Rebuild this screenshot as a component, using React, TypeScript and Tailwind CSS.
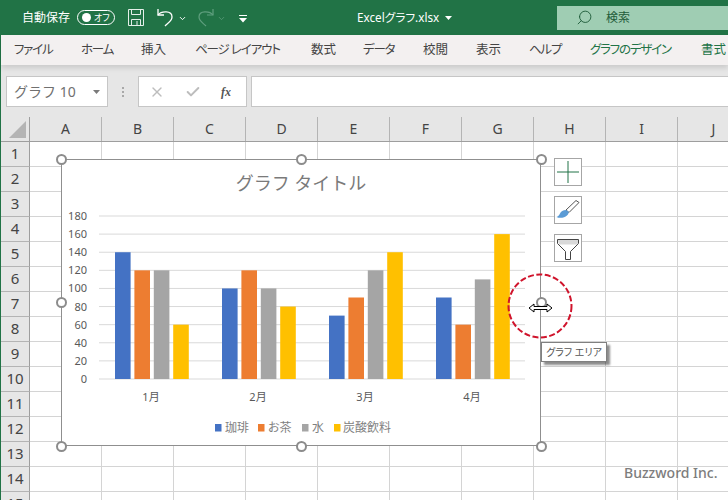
import React from 'react';
import { ChevronDown, Search, X, Check } from 'lucide-react';

const tabs = [
  { text: 'ファイル', className: 'w-[67px] tracking-[-1.2px]' },
  { text: 'ホーム', className: 'w-[60px] tracking-[-1.2px]' },
  { text: '挿入', className: 'w-[54px]' },
  { text: 'ページ レイアウト', className: 'w-[116px] tracking-[-1.1px]' },
  { text: '数式', className: 'w-[52px]' },
  { text: 'データ', className: 'w-[60px] tracking-[-1.2px]' },
  { text: '校閲', className: 'w-[53px]' },
  { text: '表示', className: 'w-[53px]' },
  { text: 'ヘルプ', className: 'w-[61px] tracking-[-1.2px]' },
  { text: 'グラフのデザイン', className: 'w-[111px] tracking-[-1.2px] text-[#217346]' },
  { text: '書式', className: 'w-[27px] text-[#217346]' },
];
const columns = ['A', 'B', 'C', 'D', 'E', 'F', 'G', 'H', 'I', 'J'];
const rows = Array.from({ length: 15 }, (_, i) => i + 1);

const colors = ['#4472c4', '#ed7d31', '#a5a5a5', '#ffc000'];
const data = [
  { label: '1月', values: [140, 120, 120, 60] },
  { label: '2月', values: [100, 120, 100, 80] },
  { label: '3月', values: [70, 90, 120, 140] },
  { label: '4月', values: [90, 60, 110, 160] },
];
const ticks = [180, 160, 140, 120, 100, 80, 60, 40, 20, 0];
const legend = [
  { x: 215, tx: 225, text: '珈琲' },
  { x: 258, tx: 268, text: 'お茶' },
  { x: 302, tx: 312, text: '水' },
  { x: 334, tx: 343, text: '炭酸飲料' },
];

const yOf = (v: number) => 379 - (v * 163) / 180;

function Chart() {
  return (
    <svg viewBox="61 159 480 287" className="absolute -left-[1.5px] -top-[1.5px] w-[480px] h-[287px]">
      <text x="301" y="190" textAnchor="middle" fontSize="18" fill="#7a7a7a" className="[font-feature-settings:normal]">グラフ タイトル</text>
      {ticks.map((t) => (
        <g key={t}>
          <line x1="99" x2="525" y1={yOf(t)} y2={yOf(t)} stroke="#d9d9d9" strokeWidth="1" />
          <text x="87" y={yOf(t) + 4} textAnchor="end" fontSize="11" fill="#595959">{t}</text>
        </g>
      ))}
      {data.map((g, i) => (
        <g key={g.label}>
          {g.values.map((v, j) => (
            <rect key={j} x={115 + i * 107 + j * 19.4} y={yOf(v)} width="15.6" height={379 - yOf(v)} fill={colors[j]} />
          ))}
          <text x={151 + i * 107} y="401" textAnchor="middle" fontSize="11" fill="#595959">{g.label}</text>
        </g>
      ))}
      {legend.map((l, i) => (
        <g key={l.text}>
          <rect x={l.x} y="424" width="6.5" height="7.5" fill={colors[i]} />
          <text x={l.tx} y="432" fontSize="12" fill="#7f7f7f">{l.text}</text>
        </g>
      ))}
    </svg>
  );
}

function Handle({ className }: { className: string }) {
  return <div className={`absolute w-[11px] h-[11px] rounded-full bg-white border-2 border-[#8c8c8c] ${className}`} />;
}

function TitleBar() {
  return (
    <div className="h-[35px] bg-[#217346] flex items-center text-white shrink-0">
      <span className="ml-[22px] text-[12px] w-[48px]">自動保存</span>
      <div className="ml-[7px] w-[38px] h-[15px] rounded-full border border-white flex items-center pl-[4px] gap-[3px]">
        <div className="w-[9px] h-[9px] rounded-full bg-white" />
        <span className="text-[9px] leading-none">オフ</span>
      </div>
      <svg width="16" height="17" viewBox="0 0 16 17" className="ml-[13px]" fill="none" stroke="#e4efe9" strokeWidth="1">
        <path d="M.5.5h15v16H.5z" />
        <path d="M3.5.5v5h9v-5M3.5 16.5v-6h9v6M9 12v4" />
      </svg>
      <svg width="17" height="19" viewBox="0 0 17 19" className="ml-[13px]" fill="none" stroke="#ffffff" strokeWidth="1.3">
        <path d="M1 1v6h6" />
        <path d="M1 7c3-4 14-5 14 2 0 4-4 6-7 9" />
      </svg>
      <ChevronDown size={9} strokeWidth={2.5} className="ml-[4px] mt-[2px]" />
      <svg width="17" height="19" viewBox="0 0 17 19" className="ml-[10px]" fill="none" stroke="#5f9f7e" strokeWidth="1.2">
        <path d="M16 1v6h-6" />
        <path d="M16 7C13 3 2 2 2 9c0 4 4 6 7 9" />
      </svg>
      <ChevronDown size={9} strokeWidth={2} color="#5f9f7e" className="ml-[3px] mt-[2px]" />
      <svg width="8" height="8" viewBox="0 0 8 8" className="ml-[13px] mt-[2px]" fill="#ffffff">
        <path d="M0 0h8v1H0zM0 3h8L4 7.5z" />
      </svg>
      <span className="ml-[110px] w-[82px] text-[11.7px] whitespace-nowrap">Excelグラフ.xlsx</span>
      <svg width="7" height="4" viewBox="0 0 7 4" className="ml-[6px] mt-[1px]" fill="#ffffff"><path d="M0 0h7L3.5 4z" /></svg>
      <div className="ml-[105px] flex-1 h-[24px] bg-[#9fcdb3] flex items-center pl-[19px] text-[#1f5c3a]">
        <Search size={17} strokeWidth={1.3} className="-scale-x-100" />
        <span className="ml-[13px] text-[12px]">検索</span>
      </div>
    </div>
  );
}

function TabBar() {
  return (
    <div className="relative z-10 h-[30px] bg-[#f3f0f0] flex items-center pl-[13px] text-[12.5px] text-[#444444] whitespace-nowrap shadow-[0_3px_5px_rgba(0,0,0,0.12)] shrink-0">
      {tabs.map((t) => (
        <span key={t.text} className={`shrink-0 ${t.className}`}>{t.text}</span>
      ))}
    </div>
  );
}

function FormulaBar() {
  return (
    <div className="h-[52px] bg-[#e6e6e6] flex pt-[11px] pl-[5px] shrink-0">
      <div className="w-[102px] h-[31px] bg-white border border-[#c6c6c6] flex items-center justify-between pl-[7px] pr-[7px] text-[14px] text-[#707070] [font-feature-settings:normal]">
        <span>グラフ 10</span>
        <svg width="7" height="4" viewBox="0 0 7 4" fill="#7a7a7a"><path d="M0 0h7L3.5 4z" /></svg>
      </div>
      <div className="w-[30px] h-[31px] flex flex-col items-center justify-center gap-[2px]">
        <div className="w-[2px] h-[2px] bg-[#a8a8a8]" />
        <div className="w-[2px] h-[2px] bg-[#a8a8a8]" />
        <div className="w-[2px] h-[2px] bg-[#a8a8a8]" />
      </div>
      <div className="w-[109px] h-[31px] bg-white border border-[#c6c6c6] flex items-center pl-[10px] text-[#bdbdbd]">
        <X size={16} strokeWidth={2} />
        <Check size={16} strokeWidth={3} className="ml-[20px]" />
        <span className="ml-[20px] font-['Liberation_Serif',serif] italic font-bold text-[12px] text-[#555555]">fx</span>
      </div>
      <div className="ml-[4px] flex-1 h-[31px] bg-white border border-[#c6c6c6] border-r-0" />
    </div>
  );
}

function Sheet() {
  return (
    <div className="flex-1 overflow-hidden bg-white">
      <div className="flex h-[25px] bg-[#e6e6e6] border-b border-[#9e9e9e]">
        <div className="w-[29px] border-r border-[#9e9e9e] shrink-0 relative">
          <div className="absolute left-[8px] top-[4px] w-0 h-0 border-l-[17px] border-l-transparent border-b-[17px] border-b-[#b4b4b4]" />
        </div>
        {columns.map((c) => (
          <div key={c} className="w-[72px] shrink-0 border-r border-[#b4b4b4] flex items-center justify-center text-[14px] text-[#444444] pb-[2px]">
            {c}
          </div>
        ))}
      </div>
      {rows.map((r) => (
        <div key={r} className="flex h-[25px]">
          <div className="w-[29px] shrink-0 bg-[#e6e6e6] border-r border-b border-r-[#9e9e9e] border-b-[#b4b4b4] flex items-center justify-center text-[15px] text-[#444444] pb-[1px]">
            {r}
          </div>
          {columns.map((c) => (
            <div key={c} className="w-[72px] shrink-0 border-r border-b border-[#d4d4d4]" />
          ))}
        </div>
      ))}
    </div>
  );
}

export default function App() {
  return (
    <div className="relative w-[728px] h-[500px] overflow-hidden flex flex-col bg-white font-['Noto_Sans','Noto_Sans_CJK_JP',sans-serif] [font-feature-settings:'palt']">
      <TitleBar />
      <div className="flex-1 flex flex-col min-h-0 border-l border-[#217346]">
        <TabBar />
        <FormulaBar />
        <Sheet />
      </div>

      {/* chart floats above the sheet */}
      <div className="absolute left-[61px] top-[159px] w-[480px] h-[287px] bg-white border-[1.5px] border-[#8f8f8f]">
        <Chart />
        <Handle className="-left-[6.5px] -top-[6.5px]" />
        <Handle className="left-[233.5px] -top-[6.5px]" />
        <Handle className="-right-[6.5px] -top-[6.5px]" />
        <Handle className="-left-[6.5px] top-[136.500px]" />
        <Handle className="-right-[6.5px] top-[136.500px]" />
        <Handle className="-left-[6.5px] -bottom-[6.5px]" />
        <Handle className="left-[233.5px] -bottom-[6.5px]" />
        <Handle className="-right-[6.5px] -bottom-[6.5px]" />
      </div>

      <div className="absolute left-[554px] top-[158px] flex flex-col gap-[10px]">
        <div className="w-[28px] h-[28px] bg-white border border-[#a6a6a6] flex items-center justify-center">
          <svg width="22" height="22" viewBox="0 0 22 22" stroke="#217346" strokeWidth="1"><path d="M11 0v22M0 11h22" /></svg>
        </div>
        <div className="w-[28px] h-[28px] bg-white border border-[#a6a6a6] flex items-center justify-center">
          <svg width="24" height="24" viewBox="0 0 24 24">
            <path d="M20 2.500l3 2-10 10-3-2.500z" fill="#ffffff" stroke="#555555" strokeWidth="1" />
            <path d="M10 12c-3 0-5 1.500-6 3.500-.8 2-2 3-3.500 3.500 3 1.500 8 1 10.500-1.500 1.500-1.500 2-3 1.500-4z" fill="#5b9bd5" />
          </svg>
        </div>
        <div className="w-[28px] h-[28px] bg-white border border-[#a6a6a6] flex items-center justify-center">
          <svg width="24" height="24" viewBox="0 0 24 24" fill="none" stroke="#444444" strokeWidth="1">
            <path d="M1.500 3.500h21v4l-8 8v8h-5v-8l-8-8z" fill="#ffffff" />
            <path d="M2 4h20v3.500l-1 1H3z" fill="#d9d9d9" stroke="none" />
          </svg>
        </div>
      </div>

      <svg width="70" height="70" viewBox="0 0 70 70" className="absolute left-[505px] top-[271px]" fill="none">
        <circle cx="35" cy="35" r="31.500" stroke="#d0142c" strokeWidth="2" strokeDasharray="6 2.500" />
        <path d="M24 37l5-4v2.500h13V33l5 4-5 4v-2.500H29V41z" fill="#ffffff" stroke="#000000" strokeWidth="1" />
      </svg>

      <div className="absolute left-[541px] top-[342px] w-[66px] h-[20px] bg-white border border-[#808080] shadow-[3px_3px_2px_rgba(0,0,0,0.45)] flex items-center justify-center text-[10px] text-[#555555] whitespace-nowrap">
        グラフ エリア
      </div>

      <div className="absolute left-[624px] top-[462px] text-[14px] font-medium text-[#707070] whitespace-nowrap opacity-90">
        Buzzword Inc.
      </div>
    </div>
  );
}
